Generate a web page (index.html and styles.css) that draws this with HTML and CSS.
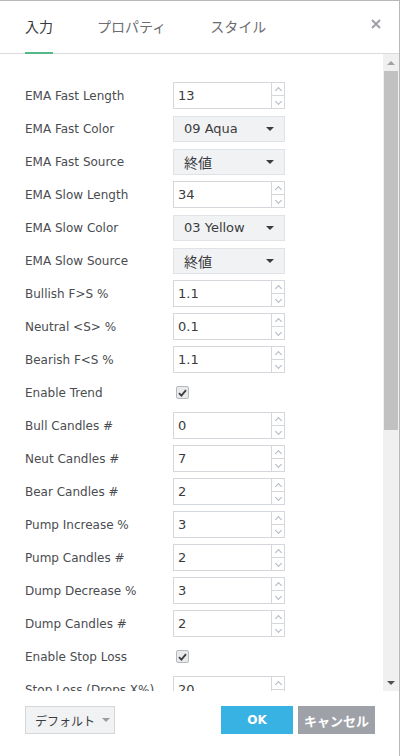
FILE: index.html
```html
<!DOCTYPE html>
<html lang="ja">
<head>
    <meta charset="UTF-8">
    <meta name="viewport" content="width=device-width, initial-scale=1.0">
    <title>入力</title>
    <link rel="stylesheet" href="styles.css">
</head>
<body>
    <div class="dialog">
        <div class="tabs">
            <span class="tab active">入力</span>
            <span class="tab">プロパティ</span>
            <span class="tab">スタイル</span>
            <svg class="close" width="10" height="10" viewBox="0 0 10 10"><path d="M1 1L9 9M9 1L1 9" stroke="#9a9ea4" stroke-width="1.8"/></svg>
        </div>
        <div class="body">
            <div class="form">
                <div class="row"><span class="label">EMA Fast Length</span><div class="num"><span class="val">13</span><span class="spin"><i class="up"></i><i class="down"></i></span></div></div>
                <div class="row"><span class="label">EMA Fast Color</span><div class="sel"><span>09 Aqua</span><b class="caret"></b></div></div>
                <div class="row"><span class="label">EMA Fast Source</span><div class="sel"><span class="jp">終値</span><b class="caret"></b></div></div>
                <div class="row"><span class="label">EMA Slow Length</span><div class="num"><span class="val">34</span><span class="spin"><i class="up"></i><i class="down"></i></span></div></div>
                <div class="row"><span class="label">EMA Slow Color</span><div class="sel"><span>03 Yellow</span><b class="caret"></b></div></div>
                <div class="row"><span class="label">EMA Slow Source</span><div class="sel"><span class="jp">終値</span><b class="caret"></b></div></div>
                <div class="row"><span class="label">Bullish F&gt;S %</span><div class="num"><span class="val">1.1</span><span class="spin"><i class="up"></i><i class="down"></i></span></div></div>
                <div class="row"><span class="label">Neutral &lt;S&gt; %</span><div class="num"><span class="val">0.1</span><span class="spin"><i class="up"></i><i class="down"></i></span></div></div>
                <div class="row"><span class="label">Bearish F&lt;S %</span><div class="num"><span class="val">1.1</span><span class="spin"><i class="up"></i><i class="down"></i></span></div></div>
                <div class="row"><span class="label">Enable Trend</span><span class="check"><svg width="9" height="8" viewBox="0 0 9 8"><path d="M1 4.2L3.4 6.6L8 1.2" fill="none" stroke="#3a3d42" stroke-width="1.8"/></svg></span></div>
                <div class="row"><span class="label">Bull Candles #</span><div class="num"><span class="val">0</span><span class="spin"><i class="up"></i><i class="down"></i></span></div></div>
                <div class="row"><span class="label">Neut Candles #</span><div class="num"><span class="val">7</span><span class="spin"><i class="up"></i><i class="down"></i></span></div></div>
                <div class="row"><span class="label">Bear Candles #</span><div class="num"><span class="val">2</span><span class="spin"><i class="up"></i><i class="down"></i></span></div></div>
                <div class="row"><span class="label">Pump Increase %</span><div class="num"><span class="val">3</span><span class="spin"><i class="up"></i><i class="down"></i></span></div></div>
                <div class="row"><span class="label">Pump Candles #</span><div class="num"><span class="val">2</span><span class="spin"><i class="up"></i><i class="down"></i></span></div></div>
                <div class="row"><span class="label">Dump Decrease %</span><div class="num"><span class="val">3</span><span class="spin"><i class="up"></i><i class="down"></i></span></div></div>
                <div class="row"><span class="label">Dump Candles #</span><div class="num"><span class="val">2</span><span class="spin"><i class="up"></i><i class="down"></i></span></div></div>
                <div class="row"><span class="label">Enable Stop Loss</span><span class="check"><svg width="9" height="8" viewBox="0 0 9 8"><path d="M1 4.2L3.4 6.6L8 1.2" fill="none" stroke="#3a3d42" stroke-width="1.8"/></svg></span></div>
                <div class="row"><span class="label">Stop Loss (Drops X%)</span><div class="num"><span class="val">20</span><span class="spin"><i class="up"></i><i class="down"></i></span></div></div>
            </div>
            <div class="scrollbar">
                <b class="arrow-up"></b>
                <div class="thumb"></div>
                <div class="track"></div>
                <b class="arrow-down"></b>
            </div>
        </div>
        <div class="footer">
            <div class="defaults">デフォルト<b class="caret grey"></b></div>
            <div class="spacer"></div>
            <div class="btn ok">OK</div>
            <div class="btn cancel">キャンセル</div>
        </div>
    </div>
</body>
</html>
```

FILE: styles.css
```css
* {
    box-sizing: border-box;
}
body {
    margin: 0;
    background: #fff;
    font-family: "DejaVu Sans", "Noto Sans CJK JP", sans-serif;
    font-size: 12px;
    color: #4a4c50;
}
.dialog {
    width: 400px;
    height: 756px;
    border-top: 1px solid #b8b8b8;
    border-right: 1px solid #b8b8b8;
    display: flex;
    flex-direction: column;
}
.tabs {
    height: 53px;
    flex-shrink: 0;
    display: flex;
    align-items: stretch;
    padding-left: 25px;
    padding-right: 18px;
    border-bottom: 1px solid #d9dbde;
    font-family: "Noto Sans CJK JP", sans-serif;
    font-size: 14px;
    color: #6a6d72;
}
.tab {
    display: flex;
    align-items: center;
    margin-right: 44px;
    padding-bottom: 1px;
    border-bottom: 2px solid transparent;
    margin-bottom: -1px;
}
.tab.active {
    color: #37393d;
    border-bottom-color: #53b987;
}
.close {
    margin-left: auto;
    align-self: center;
    margin-bottom: 6px;
}
.body {
    height: 637px;
    flex-shrink: 0;
    display: flex;
}
.form {
    flex: 1;
    overflow: hidden;
    padding: 28px 0 0 25px;
    display: flex;
    flex-direction: column;
    gap: 6px;
}
.row {
    height: 27px;
    flex-shrink: 0;
    display: flex;
    align-items: center;
}
.label {
    width: 148px;
    flex-shrink: 0;
    white-space: nowrap;
}
.num {
    width: 112px;
    height: 27px;
    border: 1px solid #d4d8dd;
    display: flex;
    background: #fff;
}
.val {
    flex: 1;
    padding-left: 4px;
    line-height: 25px;
    font-size: 13px;
    color: #3a3c40;
}
.spin {
    width: 13px;
    border-left: 1px solid #d4d8dd;
    display: flex;
    flex-direction: column;
}
.spin i {
    flex: 1;
    display: flex;
    align-items: center;
    justify-content: center;
}
.spin i.up {
    border-bottom: 1px solid #d4d8dd;
}
.spin i::before {
    content: "";
    width: 4px;
    height: 4px;
    border-left: 1px solid #aeb8c4;
    border-top: 1px solid #aeb8c4;
}
.spin i.up::before {
    transform: translateY(1px) rotate(45deg);
}
.spin i.down::before {
    transform: translateY(-1px) rotate(225deg);
}
.sel {
    width: 112px;
    height: 26px;
    border: 1px solid #dfe2e6;
    background: #f1f2f4;
    padding: 0 6px 0 10px;
    display: flex;
    align-items: center;
    justify-content: space-between;
    font-size: 13px;
    color: #3a3c40;
}
.sel .jp {
    font-family: "Noto Sans CJK JP", sans-serif;
    font-size: 14px;
}
.caret {
    width: 0;
    height: 0;
    border-left: 4px solid transparent;
    border-right: 4px solid transparent;
    border-top: 4px solid #3a3c40;
    margin-right: 4px;
}
.caret.grey {
    border-top-color: #9a9ca0;
    margin-left: 7px;
}
.check {
    width: 13px;
    height: 13px;
    margin-left: 3px;
    border: 1px solid #b5b8bc;
    border-radius: 2px;
    background: #e9eaec;
    display: flex;
    align-items: center;
    justify-content: center;
}
.scrollbar {
    width: 16px;
    background: #f0f0f0;
    display: flex;
    flex-direction: column;
    align-items: center;
}
.arrow-up, .arrow-down {
    height: 17px;
    width: 16px;
    display: flex;
    align-items: center;
    justify-content: center;
    flex-shrink: 0;
}
.arrow-up::before, .arrow-down::before {
    content: "";
    border-left: 4px solid transparent;
    border-right: 4px solid transparent;
}
.arrow-up::before {
    border-bottom: 4px solid #a3a3a3;
}
.arrow-down::before {
    border-top: 4px solid #505050;
}
.thumb {
    width: 14px;
    height: 359px;
    background: #c1c1c1;
    flex-shrink: 0;
}
.track {
    flex: 1;
}
.footer {
    flex: 1;
    display: flex;
    align-items: flex-start;
    padding: 15px 24px 0 25px;
    gap: 5px;
    font-family: "Noto Sans CJK JP", sans-serif;
    font-size: 13px;
}
.defaults {
    height: 28px;
    width: 90px;
    border: 1px solid #d4d6da;
    background: #f1f2f4;
    padding-left: 9px;
    display: flex;
    align-items: center;
    white-space: nowrap;
    font-size: 12px;
    color: #3a3c40;
}
.spacer {
    flex: 1;
}
.btn {
    height: 28px;
    display: flex;
    align-items: center;
    justify-content: center;
    color: #fff;
    font-weight: bold;
}
.ok {
    width: 72px;
    background: #38b1e3;
    font-family: "DejaVu Sans", sans-serif;
    font-size: 12px;
}
.cancel {
    width: 77px;
    background: #9ea2a8;
}
```
